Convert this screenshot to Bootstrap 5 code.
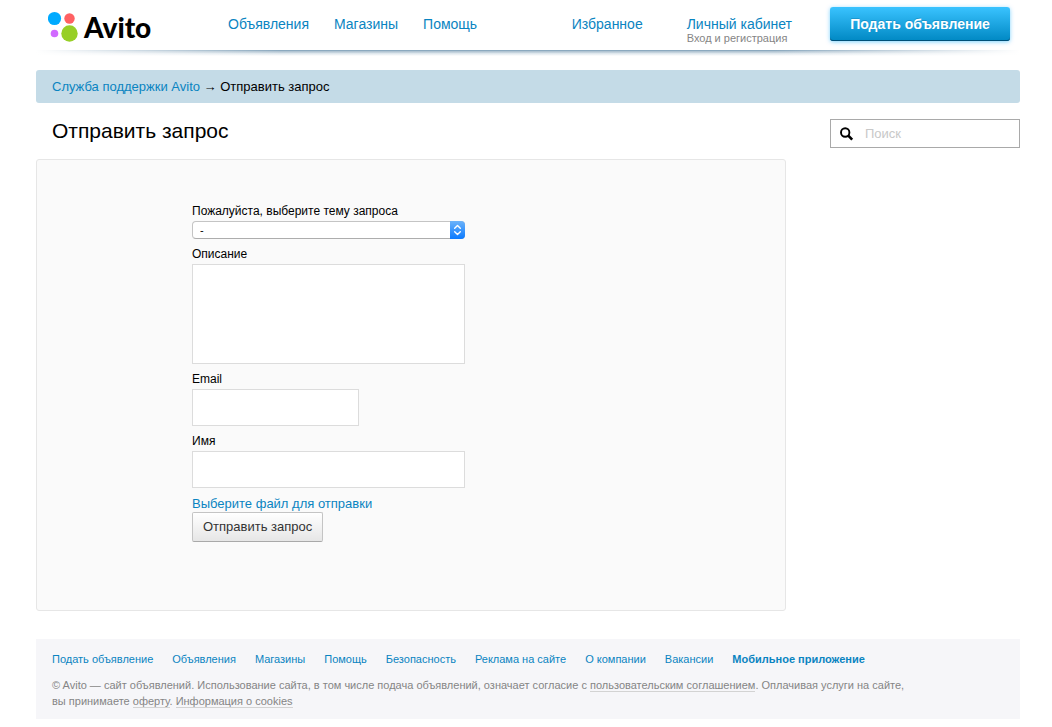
<!DOCTYPE html>
<html lang="ru">
<head>
<meta charset="utf-8">
<meta name="viewport" content="width=device-width, initial-scale=1">
<title>Отправить запрос — Служба поддержки Avito</title>
<link href="https://cdn.jsdelivr.net/npm/bootstrap@5.3.0/dist/css/bootstrap.min.css" rel="stylesheet">
<style>
  body { font: 13px/16px "Liberation Sans", Arial, sans-serif; color: #000; background: #fff; }
  a { color: #0a84c1; text-decoration: none; }
  a:hover { text-decoration: underline; }
  .page { padding: 0 32px 8px 36px; }

  .site-header { height: 50px; padding: 0 10px 0 12px; }
  .logo { color: #000; width: 180px; gap: 6px; }
  .logo:hover { text-decoration: none; }
  .logo-name { font: 900 28px/32px Lato, sans-serif; }
  .site-header .nav-item-text { font-size: 14px; line-height: 16px; }
  .main-nav { gap: 25px; margin-top: 16px; }
  .user-nav { gap: 44px; margin-top: 16px; }
  .sub { font-size: 11px; line-height: 12px; color: #858585; }
  .btn-post {
    width: 180px; height: 34px; margin: 7px 0 0 38px; padding: 0; border: 0; border-radius: 3px;
    color: #fff; font-size: 14px; font-weight: 700; text-shadow: 0 -1px 0 rgba(0, 90, 140, .3);
    background: linear-gradient(#3ac3ff, #0088c3);
    box-shadow: inset 0 -1px 0 #005079, 0 1px 4px rgba(0, 170, 255, .5);
  }
  .btn-post:hover, .btn-post:active { color: #fff; background: #0088c3; }
  .header-line {
    height: 6px; margin-bottom: 14px;
    background:
      linear-gradient(90deg, #fff, transparent 25%, transparent 75%, #fff),
      linear-gradient(#8ba9bf 0 1px, #b1c4d2 1px 2px, #d8e2e9 3px, #fff);
  }

  .crumbs { background: #c4dbe7; border-radius: 3px; padding: 9px 16px 8px; }
  .page-title { font-size: 21px; line-height: 24px; font-weight: 400; margin: 16px 16px 16px; }
  .content-row { gap: 44px; }
  .side { width: 190px; margin-top: 16px; }
  .main-col { min-width: 0; }
  .search-box { height: 29px; border: 1px solid #a9a9a9; padding: 0 9px; gap: 11px; }
  .search-box input { border: 0; outline: 0; padding: 0; min-width: 0; font-size: 13px; }
  .search-box input::placeholder { color: #c8c8c8; opacity: 1; }

  .panel { background: #fafafa; border: 1px solid #e6e6e6; border-radius: 3px; padding: 43px 20px 68px 155px; }
  .request { max-width: 273px; font-size: 12px; }
  .request label { display: block; line-height: 16px; margin-bottom: 2px; }
  .request .field { margin-bottom: 7px; }
  .request .form-control { border: 1px solid #dcdcdc; border-radius: 0; padding: 8px; font-size: 13px; line-height: 18px; height: 37px; background: #fff; }
  .request textarea.form-control { height: 100px; resize: none; }
  .request .short { max-width: 167px; }
  .topic { position: relative; height: 18px; }
  .topic select {
    appearance: none; height: 18px; width: 100%; padding: 0 24px 0 7px; font-size: 11px; line-height: 16px;
    border: 1px solid #c4c4c4; border-bottom-color: #adadad; border-radius: 4px; background: #fff; color: #000;
  }
  .topic svg { position: absolute; right: 0; top: 0; pointer-events: none; }
  .file-link { font-size: 13px; }
  .btn-send {
    height: 30px; padding: 0 10px; border: 1px solid #c4c4c4; border-bottom-color: #a9a9a9; border-radius: 2px;
    font-size: 13px; line-height: 28px; color: #333; background: linear-gradient(#fff, #e6e6e6);
  }

  .site-footer { background: #f6f6f9; margin-top: 28px; padding: 12px 16px 10px; font-size: 11px; color: #858585; }
  .foot-nav { gap: 4px 19px; margin-bottom: 10px; }
  .terms { max-width: 860px; line-height: 16px; }
  .terms a { color: #858585; border-bottom: 1px solid #d3d3d3; }
</style>
</head>
<body>
<div class="page">
  <header class="site-header d-flex align-items-start">
    <a href="#" class="logo d-flex align-items-center flex-shrink-0 pt-2">
      <svg width="30" height="38" viewBox="0 0 30 38" aria-hidden="true">
        <circle cx="6.500" cy="10.500" r="6.600" fill="#00aaff"/>
        <circle cx="21.500" cy="10.500" r="5.200" fill="#ff6163"/>
        <circle cx="6.500" cy="25.500" r="3.800" fill="#d16aff"/>
        <circle cx="21.500" cy="25.500" r="8.200" fill="#97cf26"/>
      </svg>
      <span class="logo-name">Avito</span>
    </a>
    <nav class="main-nav d-flex nav-item-text">
      <a href="#">Объявления</a>
      <a href="#">Магазины</a>
      <a href="#">Помощь</a>
    </nav>
    <div class="user-nav d-flex ms-auto nav-item-text">
      <a href="#">Избранное</a>
      <div class="text-nowrap">
        <a href="#">Личный кабинет</a>
        <div class="sub">Вход и регистрация</div>
      </div>
    </div>
    <button type="button" class="btn btn-post flex-shrink-0">Подать объявление</button>
  </header>
  <div class="header-line"></div>

  <nav class="crumbs" aria-label="Навигация">
    <a href="#">Служба поддержки Avito</a> → Отправить запрос
  </nav>

  <div class="content-row d-flex">
    <main class="main-col flex-grow-1">
      <h1 class="page-title">Отправить запрос</h1>
      <div class="panel">
        <form class="request">
          <div class="field">
            <label for="topic">Пожалуйста, выберите тему запроса</label>
            <div class="topic">
              <select id="topic"><option>-</option></select>
              <svg width="15" height="18" viewBox="0 0 15 18" aria-hidden="true">
                <defs><linearGradient id="blue" x1="0" y1="0" x2="0" y2="1"><stop offset="0" stop-color="#6cb3fa"/><stop offset="1" stop-color="#0a7aff"/></linearGradient></defs>
                <path d="M0 0h11a4 4 0 0 1 4 4v10a4 4 0 0 1-4 4H0z" fill="url(#blue)"/>
                <path d="M4.700 7.200l2.800-2.700 2.800 2.700M4.700 10.800l2.800 2.700 2.800-2.700" fill="none" stroke="#fff" stroke-width="1.400" stroke-linecap="round" stroke-linejoin="round"/>
              </svg>
            </div>
          </div>
          <div class="field">
            <label for="descr">Описание</label>
            <textarea id="descr" class="form-control"></textarea>
          </div>
          <div class="field">
            <label for="email">Email</label>
            <input id="email" type="email" class="form-control short">
          </div>
          <div class="field mb-0">
            <label for="name">Имя</label>
            <input id="name" type="text" class="form-control">
          </div>
          <div class="pt-2"><a href="#" class="file-link">Выберите файл для отправки</a></div>
          <button type="submit" class="btn btn-send">Отправить запрос</button>
        </form>
      </div>
    </main>
    <aside class="side flex-shrink-0">
      <label class="search-box d-flex align-items-center">
        <svg class="flex-shrink-0" width="14" height="14" viewBox="0 0 14 14" aria-hidden="true">
          <circle cx="5.200" cy="5.500" r="4.200" fill="none" stroke="#000" stroke-width="1.900"/>
          <path d="M8.300 8.700l3.900 4" stroke="#000" stroke-width="2.600"/>
        </svg>
        <input type="search" class="w-100" placeholder="Поиск" aria-label="Поиск">
      </label>
    </aside>
  </div>

  <footer class="site-footer">
    <nav class="foot-nav d-flex flex-wrap">
      <a href="#">Подать объявление</a>
      <a href="#">Объявления</a>
      <a href="#">Магазины</a>
      <a href="#">Помощь</a>
      <a href="#">Безопасность</a>
      <a href="#">Реклама на сайте</a>
      <a href="#">О компании</a>
      <a href="#">Вакансии</a>
      <a href="#" class="fw-bold">Мобильное приложение</a>
    </nav>
    <div class="terms">© Avito — сайт объявлений. Использование сайта, в том числе подача объявлений, означает согласие с <a href="#">пользовательским соглашением</a>. Оплачивая услуги на сайте, вы принимаете <a href="#">оферту</a>. <a href="#">Информация о cookies</a></div>
  </footer>
</div>
<script src="https://cdn.jsdelivr.net/npm/bootstrap@5.3.0/dist/js/bootstrap.bundle.min.js"></script>
</body>
</html>
